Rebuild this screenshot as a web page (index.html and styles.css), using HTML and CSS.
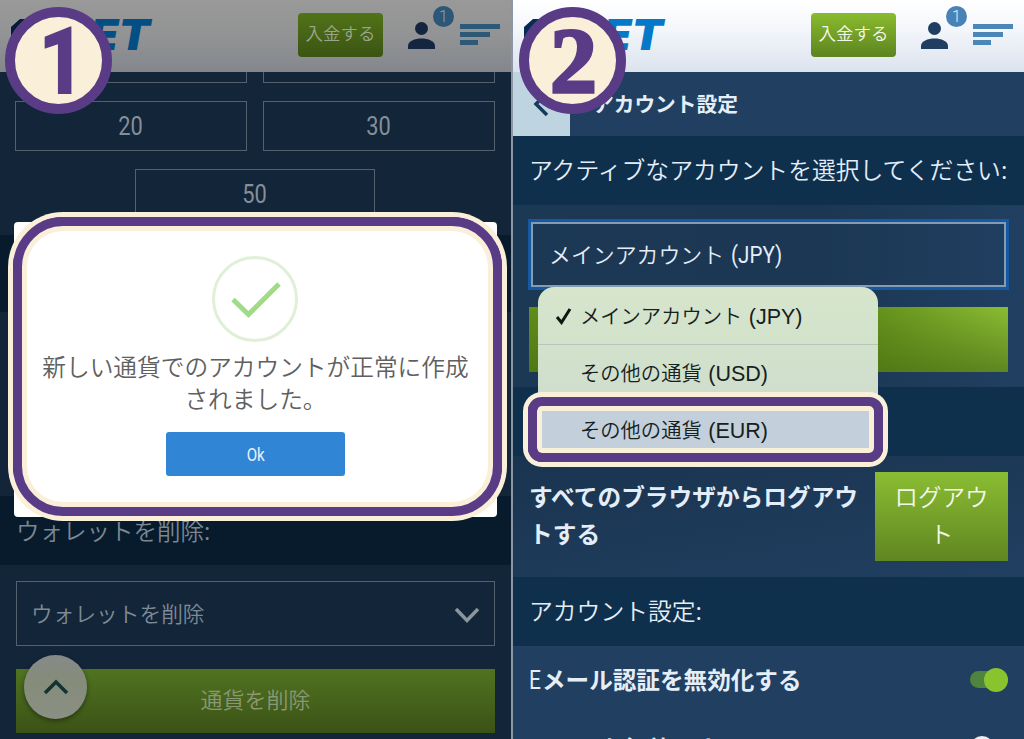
FILE: index.html
```
<!DOCTYPE html>
<html lang="ja">
<head>
    <meta charset="UTF-8">
    <meta name="viewport" content="width=device-width, initial-scale=1.0">
    <title>アカウント設定</title>
    <link rel="stylesheet" href="styles.css">
</head>
<body>
    <div class="steps">
        <!-- Step 1 -->
        <section class="screen screen-dim">
            <header class="topbar">
                <svg class="logo" width="160" height="72" viewBox="0 0 160 72">
                    <path class="logo-mark" d="M11 27L20 19H50V50H20L11 38Z"/>
                    <text class="logo-text" x="90" y="50" textLength="60" lengthAdjust="spacingAndGlyphs">ET</text>
                </svg>
                <div class="deposit">入金する</div>
                <div class="user">
                    <svg width="27" height="27" viewBox="0 0 27 27"><circle cx="13.5" cy="6.5" r="6.5"/><path d="M0 27V24C0 14 27 14 27 24V27Z"/></svg>
                    <span class="count">1</span>
                </div>
                <div class="menu-icon"><i></i><i></i><i></i></div>
            </header>
            <div class="amounts">
                <div class="amount cut"></div>
                <div class="amount cut"></div>
                <div class="amount"><span>20</span></div>
                <div class="amount"><span>30</span></div>
                <div class="amount half"><span>50</span></div>
            </div>
            <div class="band band-empty"></div>
            <div class="spacer"></div>
            <div class="band band-wallet">ウォレットを削除:</div>
            <div class="wallet">
                <div class="wallet-select">
                    <span>ウォレットを削除</span>
                    <svg width="26" height="17" viewBox="0 0 26 17"><path d="M2 2L13 13.5L24 2"/></svg>
                </div>
                <div class="wallet-button">通貨を削除</div>
            </div>

            <div class="dialog">
                <svg class="check" width="88" height="88" viewBox="0 0 88 88"><circle cx="44" cy="44" r="41.5"/><path d="M22 44.5L37.5 59.5L68 29"/></svg>
                <p>新しい通貨でのアカウントが正常に作成<br>されました。</p>
                <div class="ok"><span>Ok</span></div>
            </div>
            <div class="marker marker-dialog"></div>
            <div class="to-top">
                <svg width="26" height="16" viewBox="0 0 26 16"><path d="M2 14L13 3L24 14"/></svg>
            </div>
            <svg class="step-number" width="107" height="107" viewBox="0 0 107 107">
                <circle cx="53.5" cy="53.5" r="48.5"/>
                <text class="number-sans" transform="translate(33 87) scale(.87 1)">1</text>
            </svg>
        </section>

        <!-- Step 2 -->
        <section class="screen">
            <header class="topbar">
                <svg class="logo" width="160" height="72" viewBox="0 0 160 72">
                    <path class="logo-mark" d="M11 27L20 19H50V50H20L11 38Z"/>
                    <text class="logo-text" x="90" y="50" textLength="60" lengthAdjust="spacingAndGlyphs">ET</text>
                </svg>
                <div class="deposit">入金する</div>
                <div class="user">
                    <svg width="27" height="27" viewBox="0 0 27 27"><circle cx="13.5" cy="6.5" r="6.5"/><path d="M0 27V24C0 14 27 14 27 24V27Z"/></svg>
                    <span class="count">1</span>
                </div>
                <div class="menu-icon"><i></i><i></i><i></i></div>
            </header>
            <div class="title-row">
                <div class="back"><svg width="16" height="26" viewBox="0 0 16 26"><path d="M14 2L3 13L14 24"/></svg></div>
                <h1>アカウント設定</h1>
            </div>
            <div class="band band-active">アクティブなアカウントを選択してください:</div>
            <div class="account">
                <div class="account-select">メインアカウント <span class="narrow">(JPY)</span></div>
                <div class="account-button"></div>
            </div>
            <div class="band band-blank"></div>
            <div class="logout-row">
                <p>すべてのブラウザからログアウトする</p>
                <div class="logout">ログアウト</div>
            </div>
            <div class="band band-settings">アカウント設定:</div>
            <div class="setting"><span><b class="thin">E</b>メール認証を無効化する</span><i class="toggle"></i></div>
            <div class="setting setting-next"><span>メラーを無効にする</span><i class="toggle off"></i></div>

            <div class="dropdown">
                <div class="option"><svg width="18" height="18" viewBox="0 0 18 18"><path d="M2 10L6.5 15.5L15 2"/></svg>メインアカウント <span>(JPY)</span></div>
                <div class="option">その他の通貨 <span>(USD)</span></div>
                <div class="option selected">その他の通貨 <span>(EUR)</span></div>
            </div>
            <div class="marker marker-option"></div>
            <svg class="step-number step-two" width="107" height="107" viewBox="0 0 107 107">
                <circle cx="53.5" cy="53.5" r="48.5"/>
                <text class="number-serif" transform="translate(31 85)">2</text>
            </svg>
        </section>
    </div>
</body>
</html>
```
FILE: styles.css
```
* {
    box-sizing: border-box;
}

body {
    margin: 0;
    font-family: "Noto Sans CJK JP", sans-serif;
    font-weight: 350;
    color: #e4eef8;
}

.steps {
    display: flex;
    width: 1024px;
    height: 739px;
    overflow: hidden;
    background: #8b97a5;
    gap: 2px;
}

.screen {
    position: relative;
    width: 511px;
    height: 739px;
    overflow: hidden;
    background: #213f61;
}

.screen-dim {
    background: #132539;
    color: #858f99;
}

/* Top bar */
.topbar {
    display: flex;
    height: 72px;
    background: linear-gradient(#ffffff, #f7f9fc 30%, #dce3ee);
}

.screen-dim .topbar {
    background: linear-gradient(#999999, #929394 50%, #83878d);
}

.logo {
    flex: none;
}

.logo-mark {
    fill: #072b54;
}

.logo-text {
    font: italic 900 43px Inter, sans-serif;
    fill: #0578c8;
}

.screen-dim .logo-mark {
    fill: #061b36;
}

.screen-dim .logo-text {
    fill: #034e84;
}

.deposit {
    width: 85px;
    height: 44px;
    margin: 13px 0 0 138px;
    border-radius: 4px;
    background: linear-gradient(#8abb2e, #5c8420);
    color: #f2f8e8;
    font-size: 17.5px;
    line-height: 40px;
    text-align: center;
    white-space: nowrap;
}

.screen-dim .deposit {
    background: linear-gradient(#527318, #3b5413);
    color: #9ba58c;
}

.user {
    position: relative;
    width: 27px;
    height: 27px;
    margin: 22px 0 0 25px;
}

.user svg {
    display: block;
    fill: #203d62;
}

.screen-dim .user svg {
    fill: #14263f;
}

.count {
    position: absolute;
    left: 25px;
    top: -16px;
    width: 21px;
    height: 21px;
    border-radius: 50%;
    background: #4983b6;
    color: #e3edf6;
    font: 300 16px/21px Roboto, sans-serif;
    text-align: center;
}

.screen-dim .count {
    background: #2c5777;
    color: #8fa0ad;
}

.menu-icon {
    margin: 24px 0 0 25px;
}

.menu-icon i {
    display: block;
    width: 40px;
    height: 5px;
    margin-bottom: 3px;
    background: #4b86b9;
}

.menu-icon i:nth-child(2) {
    width: 30px;
}

.menu-icon i:nth-child(3) {
    width: 18px;
}

.screen-dim .menu-icon i {
    background: #2d5876;
}

/* Amount buttons */
.amounts {
    display: flex;
    flex-wrap: wrap;
    justify-content: center;
    align-content: flex-start;
    gap: 18px 16px;
    height: 163px;
    padding-right: 1px;
    overflow: hidden;
}

.amount {
    width: 232px;
    height: 50px;
    border: 1px solid #53606e;
    font: 400 26px/48px Roboto, sans-serif;
    text-align: center;
}

.amount.cut {
    height: 11px;
    border-top: 0;
}

.amount.half {
    width: 240px;
}

.amount span,
.ok span,
.narrow {
    display: inline-block;
    transform: scaleX(.84);
}

/* Section bands */
.band {
    height: 69px;
    padding-left: 16px;
    background: #0e304d;
    font-size: 23.8px;
    line-height: 66px;
    white-space: nowrap;
}

.screen-dim .band {
    background: #071b2d;
}

.band-empty {
    height: 77px;
}

.spacer {
    height: 184px;
}

.screen .band-wallet {
    color: #7c8791;
    font-size: 23.5px;
    line-height: 68px;
}

/* Wallet */
.wallet {
    padding: 16px 16px 0;
}

.wallet-select {
    display: flex;
    align-items: center;
    justify-content: space-between;
    height: 65px;
    padding: 0 14px;
    border: 1px solid #53606e;
    color: #7f8a94;
    font-size: 21.7px;
    line-height: 60px;
}

.wallet-select span {
    padding-bottom: 1px;
}

.wallet-select svg {
    margin-top: 3px;
    fill: none;
    stroke: #8c959e;
    stroke-width: 3.5;
}

.wallet-button {
    height: 64px;
    margin-top: 23px;
    background: linear-gradient(#517320, #3b5217);
    color: #8a9875;
    font-size: 22px;
    line-height: 59px;
    text-align: center;
}

.to-top {
    position: absolute;
    left: 24px;
    top: 655px;
    display: flex;
    align-items: center;
    justify-content: center;
    width: 63px;
    height: 64px;
    border-radius: 50%;
    background: linear-gradient(#858a89, #858c79 40%, #8b8f85);
    box-shadow: 0 2px 5px rgba(0, 0, 0, 0.4);
}

.to-top svg {
    fill: none;
    stroke: #123234;
    stroke-width: 3.5;
}

/* Dialog */
.dialog {
    position: absolute;
    left: 14px;
    top: 222px;
    display: flex;
    flex-direction: column;
    align-items: center;
    width: 483px;
    height: 295px;
    padding-top: 33px;
    border-radius: 4px;
    background: #ffffff;
    color: #606060;
}

.check {
    margin-left: -2px;
    fill: none;
    stroke: #dff0d6;
    stroke-width: 3;
}

.check path {
    stroke: #a0dc86;
    stroke-width: 5;
}

.dialog p {
    margin: 7px 0 0;
    font-size: 23.7px;
    line-height: 32px;
    text-align: center;
    white-space: nowrap;
}

.ok {
    width: 179px;
    height: 44px;
    margin-top: 18px;
    border-radius: 3px;
    background: #3185d5;
    color: #e8f3fc;
    font: 400 18px/45px Roboto, sans-serif;
    text-align: center;
}

/* Purple markers */
.marker {
    position: absolute;
    border: 9px solid #5a3b86;
    box-shadow: 0 0 0 5px #faefd9, inset 0 0 0 5px #faefd9;
}

.marker-dialog {
    left: 13px;
    top: 217px;
    width: 489px;
    height: 299px;
    border-radius: 50px;
}

.marker-option {
    left: 15px;
    top: 397px;
    width: 355px;
    height: 65px;
    border-radius: 14px;
}

.step-number {
    position: absolute;
    left: 5px;
    top: 7px;
}

.step-two {
    left: 6px;
}

.step-number circle {
    fill: #faefd9;
    stroke: #5a3b86;
    stroke-width: 10;
}

.step-number text {
    fill: #5a3b86;
}

.number-sans {
    font: 900 94px Roboto, sans-serif;
}

.step-number .number-serif {
    font: bold 94px "Liberation Serif", serif;
    stroke: #5a3b86;
    stroke-width: 3;
}

/* Account page */
.title-row {
    display: flex;
    height: 64px;
}

.back {
    width: 57px;
    padding: 19px 0 0 20px;
    background: #bfd4e1;
}

.back svg {
    fill: none;
    stroke: #143c5c;
    stroke-width: 3.5;
}

h1 {
    margin: 0 0 0 23px;
    font-size: 20.7px;
    font-weight: 700;
    line-height: 62px;
}

.account {
    height: 182px;
    padding: 17px 16px 0;
    background: linear-gradient(90deg, #1b3855, #1b3753 60%, #213f61);
}

.account-select {
    height: 65px;
    margin: 0 2px;
    padding-left: 16px;
    border: 2px solid #849bb3;
    box-shadow: 0 0 0 3px #1759a1;
    font-size: 21.9px;
    line-height: 60px;
}

.narrow {
    margin-left: 2px;
    font: 400 24.5px/60px Roboto, sans-serif;
    transform-origin: left;
}

.account-button {
    height: 65px;
    margin-top: 20px;
    background: linear-gradient(90deg, rgba(70, 110, 10, .6) 70%, rgba(70, 110, 10, 0)), linear-gradient(#8bbd33, #5f8621);
}

.logout-row {
    display: flex;
    justify-content: space-between;
    height: 121px;
    padding: 16px 16px 0;
    background: linear-gradient(170deg, #19344f, #213f61);
}

.logout-row p {
    width: 332px;
    margin: 6px 0 0;
    font-size: 23.7px;
    font-weight: 700;
    line-height: 37px;
}

.logout {
    width: 133px;
    height: 89px;
    padding: 6px 18px;
    background: linear-gradient(#8bbd33, #5f8621);
    color: #f2f8e8;
    font-size: 23.5px;
    line-height: 37px;
    text-align: center;
}

.setting {
    display: flex;
    align-items: center;
    justify-content: space-between;
    height: 67px;
    padding: 0 16px;
    font-size: 23.6px;
    font-weight: 700;
}

.setting > span {
    margin-top: -2px;
}

.setting-next {
    height: 70px;
}

.setting-next > span {
    margin-top: 0;
}

.thin {
    display: inline-block;
    width: 13px;
    font: 400 25px Roboto, sans-serif;
    transform: scaleX(.84);
    transform-origin: left;
}

.toggle {
    display: flex;
    align-items: center;
    justify-content: flex-end;
    width: 38px;
    height: 17px;
    border-radius: 9px;
    background: #4f843f;
}

.toggle::after {
    content: "";
    width: 24px;
    height: 24px;
    border-radius: 50%;
    background: #89c32e;
}

.toggle.off {
    justify-content: flex-start;
    background: #6d8197;
}

.toggle.off::after {
    background: #eeeeee;
}

/* Select list */
.dropdown {
    position: absolute;
    left: 25px;
    top: 287px;
    width: 340px;
    height: 172px;
    border-radius: 16px 16px 0 0;
    background: linear-gradient(#d6e5cb, #d1e0cc 50%, #c8d8cf);
    color: #16201c;
    font-size: 20.3px;
}

.option {
    position: relative;
    height: 57px;
    padding-left: 42px;
    line-height: 55px;
    white-space: nowrap;
}

.option:first-child {
    line-height: 56px;
}

.option + .option {
    border-top: 1px solid #b7c6b7;
}

.option.selected {
    background: #c3cfda;
}

.option span {
    margin-left: 2px;
    font-family: "Liberation Sans", sans-serif;
    font-size: 21.5px;
    font-weight: 400;
}

.option svg {
    position: absolute;
    left: 17px;
    top: 20px;
    fill: none;
    stroke: #101612;
    stroke-width: 3;
}
```
